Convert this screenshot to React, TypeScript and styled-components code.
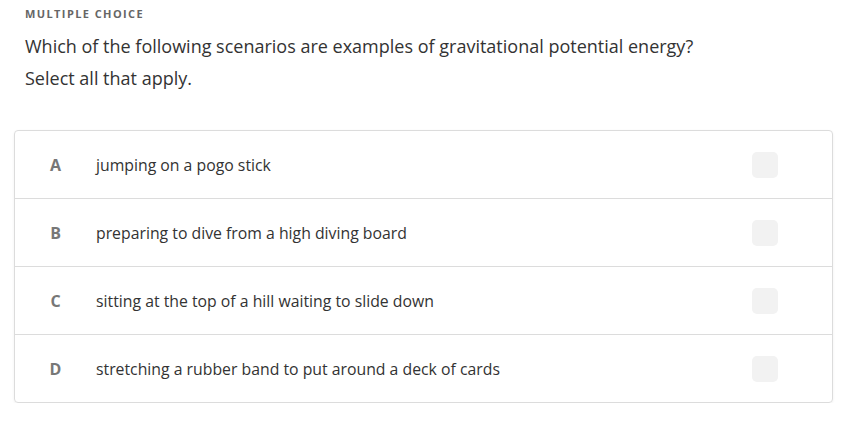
import * as React from 'react';
import styled, { createGlobalStyle } from 'styled-components';

const Global = createGlobalStyle`
  body {
    margin: 0;
    background: #fff;
    font-family: "Open Sans", "Noto Sans", sans-serif;
  }
`;

const options = [
  { letter: 'A', text: 'jumping on a pogo stick' },
  { letter: 'B', text: 'preparing to dive from a high diving board' },
  { letter: 'C', text: 'sitting at the top of a hill waiting to slide down' },
  { letter: 'D', text: 'stretching a rubber band to put around a deck of cards' },
];

export default function App() {
  return (
    <Page>
      <Global />
      <Header>
        <Label>Multiple choice</Label>
        <Question>Which of the following scenarios are examples of gravitational potential energy?</Question>
        <Question>Select all that apply.</Question>
      </Header>
      <Card>
        {options.map((o) => (
          <Row key={o.letter}>
            <Letter>{o.letter}</Letter>
            <OptionText>{o.text}</OptionText>
            <Check />
          </Row>
        ))}
      </Card>
    </Page>
  );
}

const Page = styled.div`
  padding: 6px 23px 0 14px;
`;

const Header = styled.div`
  padding-left: 11px;
  margin-bottom: 36px;
`;

const Label = styled.div`
  font-size: 11px;
  font-weight: 700;
  letter-spacing: 1.4px;
  text-transform: uppercase;
  color: #666;
  line-height: 16px;
  margin-bottom: 8px;
`;

const Question = styled.div`
  font-size: 18px;
  color: #333;
  line-height: 32px;
`;

const Card = styled.div`
  border: 1px solid #dcdcdc;
  border-radius: 4px;
  box-shadow: 0 1px 3px rgba(0, 0, 0, 0.06);
`;

const Row = styled.div`
  display: flex;
  align-items: center;
  height: 67px;
  & + & {
    border-top: 1px solid #dcdcdc;
  }
`;

const Letter = styled.div`
  width: 81px;
  text-align: center;
  font-size: 16px;
  font-weight: 700;
  color: #777;
`;

const OptionText = styled.div`
  flex: 1;
  font-size: 15.8px;
  color: #333;
`;

const Check = styled.div`
  width: 26px;
  height: 26px;
  border-radius: 5px;
  background: #f2f2f2;
  margin-right: 54px;
`;
